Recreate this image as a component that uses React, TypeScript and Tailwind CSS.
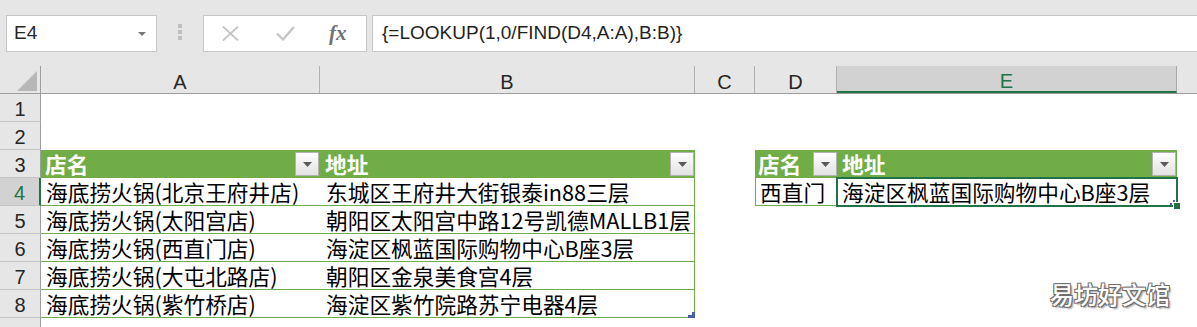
import React from 'react';

const cjk = "font-['Noto_Sans_CJK_SC','Noto_Sans',sans-serif]";
const latin = "font-['Liberation_Sans',Arial,sans-serif]";

const stores = [
  ['海底捞火锅(北京王府井店)', '东城区王府井大街银泰in88三层'],
  ['海底捞火锅(太阳宫店)', '朝阳区太阳宫中路12号凯德MALLB1层'],
  ['海底捞火锅(西直门店)', '海淀区枫蓝国际购物中心B座3层'],
  ['海底捞火锅(大屯北路店)', '朝阳区金泉美食宫4层'],
  ['海底捞火锅(紫竹桥店)', '海淀区紫竹院路苏宁电器4层'],
];

function FilterButton() {
  return (
    <div className="flex h-[24px] w-[24px] shrink-0 items-center justify-center border border-[#b2b2b2] bg-linear-to-b from-[#fefefe] to-[#e2e2e2]">
      <svg width="9" height="5" viewBox="0 0 9 5">
        <path d="M0 0h9L4.5 5z" fill="#5a5a5a" />
      </svg>
    </div>
  );
}

function RowHead({ n, active }: { n?: number; active?: boolean }) {
  return active ? (
    <div className={`flex h-full w-[41px] shrink-0 items-center justify-center border-b border-r-2 border-b-[#c3c3c3] border-r-[#217346] bg-[#d2d2d2] pt-[3px] text-[20px] leading-none text-[#217346] ${latin}`}>
      {n}
    </div>
  ) : (
    <div className={`flex h-full w-[41px] shrink-0 items-center justify-center border-b border-r border-b-[#c3c3c3] border-r-[#9e9e9e] bg-[#e6e6e6] pt-[3px] text-[20px] leading-none text-[#262626] ${latin}`}>
      {n}
    </div>
  );
}

function FormulaBar() {
  return (
    <div className="flex h-[66px] items-start bg-[#e6e6e6] pl-[6px] pt-[15px]">
      <div className="flex h-[37px] w-[151px] items-center justify-between border border-[#c6c6c6] bg-white pl-[7px] pr-[10px]">
        <span className={`text-[19px] text-[#262626] ${latin}`}>E4</span>
        <svg width="8" height="4" viewBox="0 0 8 4">
          <path d="M0 0h8L4 4z" fill="#777" />
        </svg>
      </div>
      <div className="flex h-[37px] w-[46px] flex-col items-center justify-center gap-[2px] pb-[3px]">
        <div className="h-[4px] w-[4px] bg-[#bdbdbd]" />
        <div className="h-[4px] w-[4px] bg-[#bdbdbd]" />
        <div className="h-[4px] w-[4px] bg-[#bdbdbd]" />
      </div>
      <div className="flex h-[37px] w-[164px] items-center border border-[#c6c6c6] bg-white pl-[18px]">
        <svg width="17" height="15" viewBox="0 0 17 15">
          <path d="M1 0.5L16 14.5M16 0.5L1 14.5" stroke="#c4c4c4" strokeWidth="1.8" />
        </svg>
        <svg className="ml-[37px]" width="19" height="15" viewBox="0 0 19 15">
          <path d="M1 7.5L7 13.5L18 1" stroke="#c4c4c4" strokeWidth="2.2" fill="none" />
        </svg>
        <span className="ml-[34px] font-['Liberation_Serif',serif] text-[21px] font-bold italic text-[#727272]">fx</span>
      </div>
      <div className="ml-[5px] flex h-[37px] flex-1 items-center border border-r-0 border-[#c6c6c6] bg-white pl-[9px]">
        <span className={`text-[19px] text-[#1f1f1f] ${latin}`}>{'{=LOOKUP(1,0/FIND(D4,A:A),B:B)}'}</span>
      </div>
    </div>
  );
}

function ColumnHeaders() {
  const letter = `flex h-full items-center justify-center border-r border-[#b1b1b1] pt-[4px] text-[20px] leading-none text-[#262626] ${latin}`;
  return (
    <div className="flex h-[28px] border-b border-[#9e9e9e] bg-[#e6e6e6]">
      <div className="flex h-full w-[41px] shrink-0 items-end justify-end border-r border-[#9e9e9e] pb-[2px] pr-[3px]">
        <svg width="20" height="20" viewBox="0 0 20 20">
          <path d="M20 0V20H0z" fill="#b7b7b7" />
        </svg>
      </div>
      <div className={`w-[279px] ${letter}`}>A</div>
      <div className={`w-[375px] ${letter}`}>B</div>
      <div className={`w-[60px] ${letter}`}>C</div>
      <div className={`w-[82px] ${letter}`}>D</div>
      <div className={`flex h-full w-[340px] items-center justify-center border-b-2 border-r border-b-[#217346] border-r-[#a8a8a8] bg-[#d2d2d2] pt-[4px] text-[20px] leading-none text-[#217346] ${latin}`}>
        E
      </div>
      <div className="flex-1" />
    </div>
  );
}

export default function App() {
  const text = `${cjk} whitespace-nowrap text-[21.7px] leading-[26px] text-black`;
  const head = `${cjk} whitespace-nowrap text-[21.7px] font-bold leading-[26px] text-white`;
  return (
    <div className="relative h-[327px] w-[1197px] overflow-hidden bg-white">
      <FormulaBar />
      <ColumnHeaders />

      <div className="flex h-[28px]">
        <RowHead n={1} />
      </div>
      <div className="flex h-[28px]">
        <RowHead n={2} />
      </div>

      <div className="flex h-[28px]">
        <RowHead n={3} />
        <div className="flex h-full w-[279px] items-center justify-between bg-[#70ad47] pl-[4px] pr-[1px]">
          <span className={head}>店名</span>
          <FilterButton />
        </div>
        <div className="flex h-full w-[375px] items-center justify-between bg-[#70ad47] pl-[5px] pr-[1px]">
          <span className={head}>地址</span>
          <FilterButton />
        </div>
        <div className="w-[60px]" />
        <div className="flex h-full w-[82px] items-center justify-between bg-[#70ad47] pl-[3px]">
          <span className={head}>店名</span>
          <FilterButton />
        </div>
        <div className="flex h-full w-[340px] items-center justify-between bg-[#70ad47] pl-[5px] pr-[1px]">
          <span className={head}>地址</span>
          <FilterButton />
        </div>
      </div>

      {stores.map(([name, addr], i) => (
        <div key={name} className="flex h-[28px]">
          <RowHead n={i + 4} active={i === 0} />
          <div className="flex h-full w-[279px] items-center border-b border-[#70ad47] pl-[5px]">
            <span className={text}>{name}</span>
          </div>
          <div className="relative flex h-full w-[375px] items-center border-b border-r border-[#70ad47] pl-[6px]">
            <span className={text}>{addr}</span>
            {i === stores.length - 1 && (
              <svg className="absolute bottom-[-1px] right-[-1px]" width="7" height="6" viewBox="0 0 7 6">
                <path d="M4 0h3v6H0V3h4z" fill="#4a5cb5" />
              </svg>
            )}
          </div>
          {i === 0 && (
            <>
              <div className="w-[60px]" />
              <div className="flex h-full w-[82px] items-center border-b border-l border-[#70ad47] pl-[4px]">
                <span className={text}>西直门</span>
              </div>
              <div className="relative flex h-full w-[340px] items-center pl-[5px]">
                <span className={text}>海淀区枫蓝国际购物中心B座3层</span>
                <div className="absolute -inset-[1px] border-2 border-[#217346]" />
                <div className="absolute bottom-[1px] right-[5px] h-[2px] w-[2px] bg-[#4a5cb5]" />
                <div className="absolute bottom-[4px] right-[2px] h-[2px] w-[2px] bg-[#4a5cb5]" />
                <div className="absolute bottom-[-3px] right-[-3px] h-[7px] w-[7px] border-l border-t border-white bg-[#217346]" />
              </div>
            </>
          )}
        </div>
      ))}

      <div className="flex h-[28px]">
        <RowHead />
      </div>

      <div className={`absolute left-[1050px] top-[281px] text-[24px] font-medium leading-[26px] text-white [text-shadow:-1px_-1px_0_#6e6e6e,1px_-1px_0_#6e6e6e,-1px_1px_0_#6e6e6e,1px_1px_0_#6e6e6e,2px_2px_2px_#9a9a9a] ${cjk}`}>
        易坊好文馆
      </div>
    </div>
  );
}
